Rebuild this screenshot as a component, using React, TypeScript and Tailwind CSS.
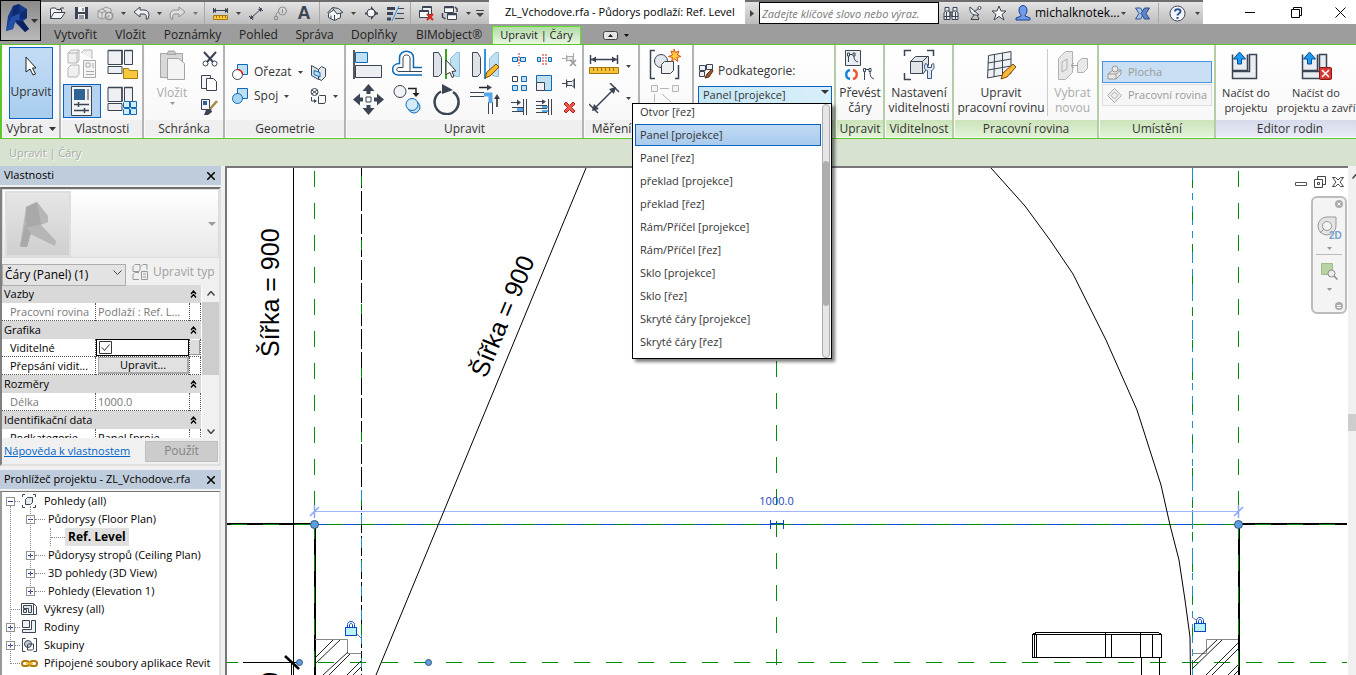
import React from "react";

type Kids = { children?: React.ReactNode };

const INK = "#3b4453";
const BLUE = "#0c6bb8";
const SKY = "#bfe0f3";

function Svg({ w, h, children }: Kids & { w: number; h: number }) {
  return (
    <svg width={w} height={h} viewBox={`0 0 ${w} ${h}`} fill="none" className="shrink-0" aria-hidden="true">
      {children}
    </svg>
  );
}

function Arrow({ color = "#444" }: { color?: string }) {
  return (
    <Svg w={5} h={3}>
      <path d="M0 0h5L2.5 3z" fill={color} />
    </Svg>
  );
}

function QButton({ label, children, narrow }: Kids & { label: string; narrow?: boolean }) {
  return (
    <button
      aria-label={label}
      className={narrow ? "flex h-full w-3 shrink-0 items-center justify-center" : "flex h-full w-6 shrink-0 items-center justify-center"}
    >
      {children}
    </button>
  );
}

function QSep() {
  return <span className="mx-[3px] h-full w-px shrink-0 bg-[#a9a9a9]" />;
}

function AppLogo() {
  return (
    <Svg w={24} h={30}>
      <path d="M8 3 14 1l8 5v9l-4 3 6 8-4 3-10-10-2 7-7 2 2-15z" fill="#163a8c" />
      <path d="M8 3 14 1l1 9-8 4zM15 10l7-4v9l-7 1z" fill="#0e2a70" />
      <path d="m7 14 8-4-1 8-4 1-2 7-7 2 3-9z" fill="#2450a8" />
      <path d="m10 17 8 1 6 8-4 3z" fill="#0b2360" />
    </Svg>
  );
}

function QuickAccess() {
  return (
    <div className="flex h-6 w-[448px] shrink-0 items-center border-t-2 border-[#6d6d6d] bg-linear-to-b from-[#e4e4e4] to-[#bcbcbc] pl-1">
      <QButton label="Otevřít">
        <Svg w={17} h={14}>
          <path d="M1.5 12.500V3l1-1h4l1 1.500h5V6M1.500 12.500 5 6.500h11l-4 6z" stroke={INK} fill="#f4f4f4" />
          <path d="M10 4.500 12 2h3" stroke={INK} />
        </Svg>
      </QButton>
      <QButton label="Uložit">
        <Svg w={15} h={14}>
          <path d="M1 1h13v12H1z" fill={INK} />
          <path d="M4 1h7v5H4zM4 8h7v5H4z" fill="#f3f3f3" />
          <path d="M9 2v3M5 10h5M5 12h5" stroke={INK} />
        </Svg>
      </QButton>
      <QButton label="Synchronizovat">
        <Svg w={17} h={15}>
          <path d="M1 5l4-2 4 2v6l-4 2-4-2zM5 3l4-2 5 2v5M1 5l4 2 4-2M5 7v6" stroke="#999" fill="#ddd" />
          <circle cx="12" cy="10" r="4" fill="#b5b5b5" stroke="#8d8d8d" />
          <path d="M10 10a2 2 0 1 1 2 2" stroke="#eee" />
        </Svg>
      </QButton>
      <QButton label="Možnosti synchronizace" narrow><Arrow /></QButton>
      <QButton label="Zpět">
        <Svg w={17} h={14}>
          <path d="M1 6 7 1v3h4c3 0 5 2 5 5l-1 4h-2c1-3 0-5-2-5H7v3z" fill="#f1f1f1" stroke={INK} />
        </Svg>
      </QButton>
      <QButton label="Historie zpět" narrow><Arrow /></QButton>
      <QButton label="Znovu">
        <Svg w={17} h={14}>
          <path d="M16 6 10 1v3H6C3 4 1 6 1 9l1 4h2C3 10 4 8 6 8h4v3z" fill="#dedede" stroke="#8e8e8e" />
        </Svg>
      </QButton>
      <QButton label="Historie znovu" narrow><Arrow color="#777" /></QButton>
      <QSep />
      <QButton label="Měřit">
        <Svg w={17} h={13}>
          <path d="M1 3.500h15M1.500 1v5M15.500 1v5" stroke={INK} />
          <path d="m1 3.500 3-2.500v5zM16 3.500 13 1v5z" fill={INK} />
          <path d="M1.500 8.500h14v4h-14z" fill="#fc3" stroke="#a97412" />
          <path d="M4.500 9v2M7.500 9v2M10.500 9v2M13.500 9v2" stroke="#a97412" />
        </Svg>
      </QButton>
      <QButton label="Možnosti měření" narrow><Arrow /></QButton>
      <QButton label="Zarovnaná kóta">
        <Svg w={17} h={15}>
          <path d="m3 12 10-9M1 10l4 4M11 1l4 4" stroke={INK} />
          <path d="m2 13 1-4 3 3zM14 2l-4 1 3 3z" fill={INK} />
        </Svg>
      </QButton>
      <QButton label="Popisek">
        <Svg w={15} h={14}>
          <circle cx="9.500" cy="5" r="4" stroke="#8c8c8c" />
          <path d="M9.500 3v4M5 6 3 8v3M1.500 10.500h3v3h-3z" stroke="#8c8c8c" />
        </Svg>
      </QButton>
      <QButton label="Text">
        <span className="font-['Liberation_Sans',sans-serif] text-lg leading-5 font-bold text-[#3b4453]">A</span>
      </QButton>
      <QSep />
      <QButton label="Výchozí 3D pohled">
        <Svg w={17} h={15}>
          <path d="M1.500 7.500v4l6 3 6-3v-5l-5-4z" fill="#f6f6f6" stroke={INK} />
          <path d="m.5 7 5-5.500 6 1L16 6.500l-6 1.500L5.500 2" fill="#d5d8dc" stroke={INK} />
          <path d="M7.500 9v5M4 9.500v3" stroke={INK} />
        </Svg>
      </QButton>
      <QButton label="Možnosti 3D" narrow><Arrow /></QButton>
      <QButton label="Řez">
        <Svg w={15} h={14}>
          <path d="M1 7.500h3M11 7.500h3" stroke={INK} strokeWidth="2" />
          <path d="M7 0l6 7-6 7z" fill={INK} />
          <circle cx="7" cy="7" r="4" fill="#f6f6f6" stroke={INK} />
        </Svg>
      </QButton>
      <QButton label="Tenké čáry">
        <Svg w={17} h={15}>
          <path d="M0 2.500h8M0 7.500h6M0 13h4" stroke={INK} strokeWidth="3" />
          <path d="M11 2.500h6M10 7.500h7M8 12.500h9" stroke={INK} />
          <path d="M12 0 5 15" stroke="#2e94e6" />
        </Svg>
      </QButton>
      <QSep />
      <QButton label="Zavřít skryté">
        <Svg w={17} h={16}>
          <path d="M4.500 1.500h9v8h-9z" fill="#eee" stroke={INK} />
          <path d="M1.500 5.500h9v7h-9z" fill="#fafafa" stroke={INK} />
          <path d="M2 6.500h8M5 2.500h8" stroke={INK} />
          <path d="m9 9 6 6M15 9l-6 6" stroke="#d9261c" strokeWidth="2" />
        </Svg>
      </QButton>
      <QButton label="Přepnout okna">
        <Svg w={18} h={16}>
          <path d="M3.500 1.500h9v6h-9zM6.500 8.500h9v6h-9z" fill="#fafafa" stroke={INK} />
          <path d="M3 2.500h10M6 9.500h10M14 2l2 2v3M1.500 8v4l3 2" stroke={INK} strokeWidth="1.500" />
        </Svg>
      </QButton>
      <QButton label="Seznam oken" narrow><Arrow /></QButton>
      <QButton label="Přizpůsobit panel" narrow>
        <Svg w={8} h={7}>
          <path d="M0 .5h8" stroke="#444" />
          <path d="M0 3h8L4 7z" fill="#444" />
        </Svg>
      </QButton>
    </div>
  );
}

function InfoCenter() {
  return (
    <div className="flex h-6 w-[458px] shrink-0 items-center border-t-2 border-[#6d6d6d] bg-linear-to-b from-[#e4e4e4] to-[#bcbcbc]">
      <button aria-label="Sbalit hledání" className="flex h-full w-3.5 shrink-0 items-center justify-center">
        <Svg w={4} h={7}>
          <path d="M0 0v7l4-3.500z" fill="#444" />
        </Svg>
      </button>
      <input
        aria-label="Hledat"
        placeholder="Zadejte klíčové slovo nebo výraz."
        className="h-[22px] w-[180px] shrink-0 border border-black bg-white px-0.5 text-[11px] italic placeholder:text-[#777]"
      />
      <button aria-label="Najít" className="flex w-6 justify-center">
        <Svg w={16} h={15}>
          <path d="M2 5V1.500h4V5M10 5V1.500h4V5M1 13.500V7l1.500-2H6l1 2v6.500zM9 13.500V7l1-2h3.500L15 7v6.500zM7 6h2v4H7z" fill="#e9e9e9" stroke={INK} />
          <path d="M3.500 6v7M12.500 6v7M1 10.500h6M9 10.500h6" stroke={INK} />
        </Svg>
      </button>
      <button aria-label="Centrum komunikace" className="flex w-6 justify-center">
        <Svg w={15} h={16}>
          <path d="M2 2c-1 5 2 9 9 8z" fill="#eee" stroke={INK} />
          <path d="m6 7 5-4M6 10l-3 4.500h8M9 10l2 4" stroke={INK} />
          <circle cx="11.500" cy="3" r="1.500" stroke={INK} fill="#fff" />
        </Svg>
      </button>
      <button aria-label="Oblíbené" className="flex w-6 justify-center">
        <Svg w={16} h={16}>
          <path d="m8 1 2 5h5l-4 3.500 2 5.500-5-3.500L3 15l2-5.500L1 6h5z" fill="#f5f5f5" stroke={INK} />
        </Svg>
      </button>
      <button className="flex items-center gap-1 pl-1 text-xs text-black">
        <Svg w={16} h={16}>
          <path d="M4 5c0-6 8-6 8 0 0 3-1 4-2 5v1l5 2v2H1v-2l5-2v-1C5 9 4 8 4 5z" fill="#6f9be8" stroke="#1d3f94" />
        </Svg>
        <span className="w-[82px] text-left">michalknotek...</span>
        <Arrow />
      </button>
      <button aria-label="Exchange Apps" className="flex w-8 justify-center">
        <Svg w={15} h={13}>
          <path d="M.5 1h5L9 6.500 5.500 12h-5L4 6.500z" fill="#a9c2ea" stroke="#2f5590" />
          <path d="M14.500 1h-5L6 6.500 9.500 12h5L11 6.500z" fill="#5f86c6" stroke="#2a4a86" />
        </Svg>
      </button>
      <span className="h-5 w-px bg-[#aaa]" />
      <button aria-label="Nápověda" className="flex w-9 justify-center">
        <Svg w={17} h={17}>
          <circle cx="8.500" cy="8.500" r="7.500" fill="#f4f6fa" stroke={INK} />
          <path d="M6 6.500C6 3.500 11.500 3.500 11.500 6.500c0 2-3 2-3 4M8.500 12v2" stroke="#2d5599" strokeWidth="2" />
        </Svg>
      </button>
      <Arrow />
    </div>
  );
}

function WindowControls() {
  return (
    <div className="flex h-6 w-[153px] shrink-0 items-center bg-white pl-6">
      <button aria-label="Minimalizovat" className="flex w-[46px] shrink-0 justify-center">
        <Svg w={10} h={10}><path d="M0 5.500h10" stroke="#000" /></Svg>
      </button>
      <button aria-label="Obnovit" className="flex w-[46px] shrink-0 justify-center">
        <Svg w={11} h={11}><path d="M.5 2.500h8v8h-8zM2.500 2.500v-2h8v8h-2" stroke="#000" /></Svg>
      </button>
      <button aria-label="Zavřít" className="flex flex-1 justify-center pl-1.5">
        <Svg w={11} h={11}><path d="m.5.5 10 10M10.500.5l-10 10" stroke="#000" /></Svg>
      </button>
    </div>
  );
}

function Header() {
  const tab = "flex h-5 items-center justify-center pt-0.5 text-xs text-[#222]";
  return (
    <header className="flex shrink-0 bg-[#9d9d9d]">
      <button
        aria-label="Nabídka aplikace"
        className="flex h-[41px] w-[41px] shrink-0 items-start gap-0.5 border border-black bg-linear-to-b from-[#8a8a8a] to-[#b9b9b9] pt-0.5 pl-1"
      >
        <AppLogo />
        <span className="mt-4"><Svg w={7} h={4}><path d="M0 0h7L3.500 4z" fill="#333" /></Svg></span>
      </button>
      <div className="flex min-w-0 flex-1 flex-col">
        <div className="flex bg-white">
          <QuickAccess />
          <h1 className="min-w-0 flex-1 overflow-hidden bg-white pl-4 text-[11px] leading-6 whitespace-nowrap text-black">
            ZL_Vchodove.rfa - Půdorys podlaží: Ref. Level
          </h1>
          <InfoCenter />
          <WindowControls />
        </div>
        <nav className="flex items-end">
          <button className={`${tab} ml-1 w-[61px]`}>Vytvořit</button>
          <button className={`${tab} w-[49px]`}>Vložit</button>
          <button className={`${tab} w-[75px]`}>Poznámky</button>
          <button className={`${tab} w-[57px]`}>Pohled</button>
          <button className={`${tab} w-[55px]`}>Správa</button>
          <button className={`${tab} w-[64px]`}>Doplňky</button>
          <button className={`${tab} w-[86px]`}>BIMobject®</button>
          <button className="flex h-[18px] w-[89px] items-center justify-center border border-b-0 border-[#5fe12c] bg-linear-to-b from-[#b2dba6] to-[#e9f6e3] text-[11px] text-[#222]">
            Upravit | Čáry
          </button>
          <button aria-label="Minimalizovat pás karet" className="mb-1 ml-[22px] flex items-center gap-1.5">
            <Svg w={15} h={9}>
              <rect x=".5" y=".5" width="14" height="8" rx="2" fill="#e6e6e6" stroke="#444" />
              <path d="M5 6h5L7.500 3z" fill="#222" />
            </Svg>
            <Arrow color="#111" />
          </button>
        </nav>
      </div>
    </header>
  );
}

type Tone = "plain" | "green" | "blue";

const captionTone: Record<Tone, string> = {
  plain: "bg-[#efefef]",
  green: "bg-linear-to-b from-[#cbe3ba] to-[#e2f3d8]",
  blue: "bg-linear-to-b from-[#d5d9ea] to-[#e9ebf7]",
};

const edgeTone: Record<Tone, string> = {
  plain: "border-[#b4b4b4]",
  green: "border-[#b3cda6]",
  blue: "border-[#b3cda6]",
};

function Panel({ label, width, tone = "plain", children }: Kids & { label?: React.ReactNode; width: string; tone?: Tone }) {
  return (
    <section className={`flex flex-col border-r-2 pl-px ${edgeTone[tone]} ${width}`}>
      <div className="flex flex-1 bg-linear-to-b from-white to-[#f8f8f8]">{children}</div>
      <h2 className={`mb-px flex h-[17px] items-center justify-center gap-1.5 text-xs text-[#333] ${captionTone[tone]}`}>{label}</h2>
    </section>
  );
}

function BigButton({ icon, lines, width, muted, small }: { icon: React.ReactNode; lines: string[]; width: string; muted?: boolean; small?: boolean }) {
  return (
    <button
      className={`flex flex-col items-center pt-1 leading-[15px] whitespace-nowrap ${small ? "text-[11px]" : "text-xs"} ${muted ? "text-[#aaa]" : "text-[#333]"} ${width}`}
    >
      <span className="mb-1 flex h-8 items-center">{icon}</span>
      {lines.map((l) => (
        <span key={l} className="leading-[15px]">{l}</span>
      ))}
    </button>
  );
}

function TypeGrid({ overlay }: { overlay: React.ReactNode }) {
  return (
    <Svg w={31} h={30}>
      <path d="M1 1.500h14v14H1zM17.500 1.500h8v14h-8zM1 17.500h14v7H1z" fill="#eef0f3" stroke={INK} />
      <path d="M1 1.500h14v14M17.500 1.500h8" stroke={INK} strokeWidth="1.500" />
      {overlay}
    </Svg>
  );
}

function LoadIcon({ close }: { close?: boolean }) {
  return (
    <Svg w={31} h={31}>
      <path d="M1.500 4.500h15v16h-15zM17.500 4.500h8v16h-8zM1.500 21.500h24v7h-24z" fill="#e9ecf0" />
      <path d="M1.500 4.500v16h15v-16M1.500 21v7.500h24v-24h-7v17h-17" stroke={INK} strokeWidth="1.500" />
      <path d="M6.500 14V9h-4l6-7 6 7h-4v5z" fill="#1d9bf0" stroke="#0a4e9b" />
      {close && (
        <>
          <rect x="18.500" y="17.500" width="12" height="12" rx="1" fill="#d33a34" stroke="#8e1512" />
          <path d="m21 20 7 7M28 20l-7 7" stroke="#fff" strokeWidth="1.500" />
        </>
      )}
    </Svg>
  );
}

function ModifyTools() {
  return (
    <>
      <div className="grid grid-cols-[39px_39px_39px_39px] grid-rows-[34px_36px] place-items-center pt-0.5 pl-0.5">
        <button aria-label="Zarovnat">
          <Svg w={31} h={31}>
            <path d="M1 1v29" stroke="#222" strokeWidth="1.500" />
            <path d="M2.500 3.500h12v10h-12z" fill={SKY} stroke={BLUE} />
            <path d="M2.500 16.500h26v12h-26z" fill="#eceff2" stroke={INK} />
          </Svg>
        </button>
        <button aria-label="Odsadit">
          <Svg w={31} h={28}>
            <path d="M30 17.500h-8.500V8c0-9-14-9-14 0v5.500c-9 0-9 11.500-1 11.500H30" stroke={BLUE} strokeWidth="1.500" />
            <path d="M30 21.500h-12V8c0-4-7-4-7 0v9.500H7c-3 0-3 4 0 4h11" stroke={INK} />
          </Svg>
        </button>
        <button aria-label="Ozrcadlit - vybrat osu">
          <Svg w={31} h={31}>
            <path d="M2.500 3.500h5l3 5v16l-3 3h-5z" fill="#dfe3e8" stroke={INK} />
            <path d="M28.500 3.500h-3l-6 6v15l6 3h3z" fill={SKY} stroke="#8fbcd8" />
            <path d="M15 0v30" stroke="#37a61c" strokeWidth="2" />
            <path d="m15 11 10 11-4 .5 2 5-2 1-2-5-4 2z" fill="#fff" stroke="#333" />
          </Svg>
        </button>
        <button aria-label="Ozrcadlit - nakreslit osu">
          <Svg w={31} h={31}>
            <path d="M2.500 3.500h5l3 5v16l-3 3h-5z" fill="#dfe3e8" stroke={INK} />
            <path d="M28.500 3.500h-3l-6 6v15l6 3h3z" fill={SKY} stroke="#8fbcd8" />
            <path d="M15 0v30" stroke="#2e94e6" strokeWidth="2" />
            <path d="m15 29 2-6 9-8 3 3-9 9z" fill="#fbb829" stroke="#7b4a0b" />
          </Svg>
        </button>
        <button aria-label="Přesunout">
          <Svg w={31} h={31}>
            <path d="m15.500 0 6 7h-12zM15.500 31l6-7h-12zM0 15.500l7-6v12zM31 15.500l-7-6v12z" fill={INK} />
            <path d="M15.500 5v5M15.500 21v5M5 15.500h5M21 15.500h5" stroke={INK} strokeWidth="4" />
            <path d="M13 13h5v5h-5z" fill="#fff" stroke={INK} />
          </Svg>
        </button>
        <button aria-label="Kopírovat">
          <Svg w={31} h={31}>
            <circle cx="8" cy="7.500" r="6" fill="#f2f3f5" stroke={INK} />
            <path d="M16 4.500h8v5" stroke="#222" strokeWidth="1.500" />
            <path d="m24 13-3.500-4h7z" fill="#222" />
            <circle cx="22" cy="23" r="6" fill={SKY} stroke={BLUE} />
            <circle cx="20" cy="20.500" r="6" fill="#d5ebf8" stroke={BLUE} />
          </Svg>
        </button>
        <button aria-label="Otočit">
          <Svg w={29} h={31}>
            <path d="M9 7.500A12 12 0 1 0 21 8" stroke={INK} strokeWidth="2.500" />
            <path d="M10 0v10l11-4z" fill={INK} />
          </Svg>
        </button>
        <button aria-label="Oříznout roh">
          <Svg w={31} h={31}>
            <path d="M9 3.500h10" stroke="#222" strokeWidth="1.500" />
            <path d="m22 3.500-5-3v6zM27 10l-3 5h6z" fill={INK} />
            <path d="M27 14v9" stroke="#222" strokeWidth="1.500" />
            <path d="M0 8.500h14M0 12.500h14M18.500 18v12M22.500 18v12" stroke={INK} />
            <path d="M14 10.500h6.500V19" stroke="#58a7e8" strokeWidth="4" />
          </Svg>
        </button>
      </div>
      <div className="grid grid-cols-[25px_25px_25px] grid-rows-[24px_24px_24px] place-items-center pt-0.5 pl-0.5">
        <button aria-label="Rozdělit prvek">
          <Svg w={17} h={13}>
            <path d="M1.500 4.500h5v4h-5zM9.500 4.500h5v4h-5z" fill={SKY} stroke={BLUE} />
            <path d="M8 0v13" stroke="#c9281c" strokeDasharray="2 1" />
          </Svg>
        </button>
        <button aria-label="Rozdělit s mezerou">
          <Svg w={17} h={13}>
            <path d="M1.500 4.500h3v4h-3zM12.500 4.500h3v4h-3z" fill={SKY} stroke={BLUE} />
            <path d="M7 1v11M10 1v11" stroke="#c9281c" strokeDasharray="2 1" />
          </Svg>
        </button>
        <button aria-label="Uvolnit">
          <Svg w={17} h={17}>
            <path d="M1 7.500h4M5.500 4v7M6 5.500h6v4H6zM12.500 2v11" stroke="#aaa" fill="#eee" />
            <path d="m9 9 6 6M15 9l-6 6" stroke="#999" strokeWidth="1.500" />
          </Svg>
        </button>
        <button aria-label="Pole">
          <Svg w={17} h={17}>
            <path d="M1.500 1.500h5v5h-5z" fill="#fff" stroke={INK} />
            <path d="M10.500 1.500h5v5h-5zM1.500 10.500h5v5h-5zM10.500 10.500h5v5h-5z" fill={SKY} stroke={BLUE} />
          </Svg>
        </button>
        <button aria-label="Měřítko">
          <Svg w={17} h={17}>
            <path d="M.5.5h15v15H.5z" fill={SKY} stroke={BLUE} />
            <path d="M.5 7.500h8v8h-8z" fill="#f0f2f4" stroke={INK} />
          </Svg>
        </button>
        <button aria-label="Připnout">
          <Svg w={15} h={13}>
            <path d="M0 6.500h4M4.500 2.500v8M5 4.500h5l2-2v8l-2-2H5z" stroke={INK} fill="#eee" />
            <path d="M12.500 1.500v10" stroke={INK} />
          </Svg>
        </button>
        <button aria-label="Oříznout jeden prvek">
          <Svg w={17} h={16}>
            <path d="M0 3.500h8M1 8.500h11M1 12.500h11M12.500 0v16M15.500 0v16" stroke={INK} />
            <path d="m10 3.500-4-3v6z" fill={INK} />
            <path d="M6 10.500h6" stroke="#58a7e8" strokeWidth="3" />
          </Svg>
        </button>
        <button aria-label="Oříznout více prvků">
          <Svg w={17} h={16}>
            <path d="M0 2.500h8M0 6.500h11M0 9.500h11M0 13.500h11M12.500 0v16M15.500 0v16" stroke={INK} />
            <path d="m10 2.500-4-2v5z" fill={INK} />
            <path d="M6 8h6M6 12h6" stroke="#58a7e8" strokeWidth="2" />
          </Svg>
        </button>
        <button aria-label="Odstranit">
          <Svg w={13} h={13}>
            <path d="m1 3 2-2 3.500 3.500L10 1l2 2-3.500 3.500L12 10l-2 2-3.500-3.500L3 12l-2-2 3.500-3.500z" fill="#ee5a50" stroke="#b81c14" />
          </Svg>
        </button>
      </div>
    </>
  );
}

const options = [
  "Panel [projekce]",
  "Panel [řez]",
  "překlad [projekce]",
  "překlad [řez]",
  "Rám/Příčel [projekce]",
  "Rám/Příčel [řez]",
  "Sklo [projekce]",
  "Sklo [řez]",
  "Skryté čáry [projekce]",
  "Skryté čáry [řez]",
];

function Subcategory() {
  return (
    <div className="flex w-full flex-col pt-4 pl-[3px]">
      <label htmlFor="subcategory" className="flex h-5 items-center gap-1 text-xs text-[#333]">
        <Svg w={16} h={16}>
          <path d="M1.500 2.500h6v5h-6zM8.500 1.500h6v5h-6zM1.500 8.500h5v5h-5z" fill="#eef0f3" stroke={INK} />
          <path d="m14 6-5 5-2 4 4-1 4-6z" fill="#9b5a2e" stroke="#5a3015" />
        </Svg>
        Podkategorie:
      </label>
      <div className="relative h-[22px] w-[134px]">
        <select
          id="subcategory"
          className="h-full w-full appearance-none border border-[#0a62c4] bg-linear-to-r from-[#c6e8f6] to-[#d8effa] pb-1 pl-1 text-[11px] text-[#333]"
        >
          {options.map((o) => (
            <option key={o}>{o}</option>
          ))}
        </select>
        <span className="pointer-events-none absolute top-[9px] right-[3px]">
          <Svg w={8} h={4}><path d="M0 0h8L4 4z" fill="#333" /></Svg>
        </span>
        <div className="absolute top-full right-0 z-20 flex w-[200px] border border-black bg-white shadow-[3px_3px_3px_rgba(0,0,0,0.5)]">
          <ul className="flex-1 pr-px pb-1 pl-0.5 text-[11px] text-[#333]">
            <li className="h-5 pl-[5px] leading-4">Otvor [řez]</li>
            {options.map((o, i) => (
              <li
                key={o}
                className={
                  i === 0
                    ? "mb-px h-[22px] border border-[#0a62c4] bg-linear-to-b from-[#c0daf4] to-[#a9cbed] pl-1 leading-5"
                    : "h-[23px] pl-[5px] leading-[22px]"
                }
              >
                {o}
              </li>
            ))}
          </ul>
          <div className="mr-px flex w-2 flex-col rounded-sm border border-[#aaa] bg-[#e6e6e6] pt-14">
            <span className="h-[145px] rounded-sm bg-[#adadad]" />
          </div>
        </div>
      </div>
    </div>
  );
}

function Ribbon() {
  return (
    <div className="relative z-10 flex h-[95px] shrink-0 border-y border-l-2 border-[#5fc52c] bg-[#fafafa]">
      <Panel width="w-[59px]" label={<>Vybrat <Svg w={7} h={4}><path d="M0 0h7L3.500 4z" fill="#333" /></Svg></>}>
        <button className="mt-0.5 ml-1.5 flex h-[72px] w-11 flex-col items-center gap-2 border border-[#0a62c4] bg-linear-to-b from-[#c3dcf5] to-[#a9cdef] pt-2 text-xs text-[#333]">
          <Svg w={13} h={20}>
            <path d="m1 1 10 11H7.500l3 6-2.500 1-3-6-4 3z" fill="#fff" stroke="#222" />
          </Svg>
          Upravit
        </button>
      </Panel>
      <Panel width="w-[83px]" label="Vlastnosti">
        <div className="grid grid-cols-[39px_42px] grid-rows-[37px_37px] place-items-center">
          <button aria-label="Vlastnosti typu">
            <Svg w={31} h={30}>
              <path d="M2 4l3-3h8v10l-2 3H2zM15 4l3-3h8v9M2 19l3-3h8v9l-2 3H2zM2 4h9v10M11 4l2-3" stroke="#b5b5b5" fill="#f0f0f0" />
              <path d="M17.500 11.500h12v17h-12z" fill="#f5f5f5" stroke="#aaa" />
              <path d="M20 14h4v4h-4zM27 14v5M20 22.500h8M20 25.500h8" stroke="#aaa" />
            </Svg>
          </button>
          <button aria-label="Kategorie rodiny">
            <TypeGrid overlay={<path d="M16.500 29.500v-10h5l1 2h8v8z" fill="#f8c83c" stroke="#a9790f" />} />
          </button>
          <button aria-label="Vlastnosti" className="flex h-[34px] w-[38px] items-center justify-center border border-[#0a62c4] bg-[#b3d3f0]">
            <Svg w={21} h={30}>
              <path d="M.5.5h20v29H.500z" fill="#f3f5f7" stroke={INK} />
              <path d="M3 3h11v11H3z" fill="#2e6496" />
              <path d="M16 3h2v11h-2z" fill="#999" />
              <path d="M3 18.500h15M3 24.500h15M7.500 16v5M13.500 22v5" stroke={INK} strokeWidth="1.500" />
            </Svg>
          </button>
          <button aria-label="Typy rodin">
            <TypeGrid overlay={<path d="M16.500 16.500l1-1h5v6h-6zM23.500 16.500l1-1h5v6h-6zM16.500 23.500l1-1h5v6h-6zM23.500 23.500l1-1h5v6h-6z" fill="#d3ecf8" stroke={BLUE} />} />
          </button>
        </div>
      </Panel>
      <Panel width="w-[81px]" label="Schránka">
        <button className="flex w-[54px] flex-col items-center pt-1 text-xs text-[#aaa]">
          <Svg w={27} h={32}>
            <path d="M1.500 4.500h22v24h-22z" fill="#d8d8d8" stroke="#a5a5a5" />
            <path d="M8 5.500 9.500 2h6L17 5.500z" fill="#c8c8c8" stroke="#a5a5a5" />
            <path d="M8.500 9.500h11l6 5v16h-17z" fill="#f4f4f4" stroke="#a5a5a5" />
          </Svg>
          <span className="mt-1 leading-[15px]">Vložit</span>
          <span className="mt-0.5"><Arrow color="#999" /></span>
        </button>
        <div className="grid grid-rows-[24px_24px_24px] place-items-center pt-0.5 pl-0.5">
          <button aria-label="Vyjmout">
            <Svg w={16} h={16}>
              <path d="m2 1 9 10M14 1 5 11" stroke={INK} strokeWidth="2" />
              <circle cx="3.500" cy="12.500" r="2.500" stroke={INK} />
              <circle cx="12.500" cy="12.500" r="2.500" stroke={INK} />
            </Svg>
          </button>
          <button aria-label="Kopírovat do schránky">
            <Svg w={17} h={17}>
              <path d="M.5.5h9v13h-9z" fill="#f5f5f5" stroke={INK} />
              <path d="M5.500 3.500h7l3 3v9h-10z" fill="#fff" stroke={INK} />
            </Svg>
          </button>
          <button aria-label="Přiřadit vlastnosti typu">
            <Svg w={17} h={17}>
              <path d="M.5.500h8v10h-8z" fill="#f5f5f5" stroke={INK} />
              <path d="M2 2h4v4H2z" fill="#2e6496" />
              <path d="m16 2-7 8" stroke="#a08a50" strokeWidth="2.500" />
              <path d="m3 16 2-5 5-1 1 3-4 3z" fill={INK} />
            </Svg>
          </button>
        </div>
      </Panel>
      <Panel width="w-[121px]" label="Geometrie">
        <div className="flex w-full flex-col gap-1.5 pt-[18px] pl-1 text-xs text-[#333]">
          <div className="flex h-[18px] items-center">
            <button className="flex w-[74px] items-center gap-1.5 pl-0.5">
              <Svg w={16} h={17}>
                <path d="M5.500.5h10v10h-10z" fill={SKY} stroke={BLUE} />
                <circle cx="5.500" cy="10.500" r="5" fill="#fff" stroke={INK} />
                <path d="M5.500 5.500a5 5 0 0 1 5 5" stroke="#e0211a" strokeWidth="1.500" />
              </Svg>
              Ořezat <Arrow />
            </button>
            <button aria-label="Rozdělit plochu" className="ml-1.5">
              <Svg w={17} h={17}>
                <path d="m1.500 1.500 7 4v10l-7-4zM8.500 5.500l3-3 4 2v8l-4 4-3-1.500" fill="#e4e7ea" stroke={INK} />
                <path d="m4 6.500 6 2v4.500l-6-2.500z" fill={SKY} stroke={BLUE} />
              </Svg>
            </button>
          </div>
          <div className="flex h-[18px] items-center">
            <button className="flex w-[74px] items-center gap-1.5 pl-0.5">
              <Svg w={16} h={17}>
                <path d="M5.500.5h10v10h-10z" fill={SKY} stroke={BLUE} />
                <circle cx="5.500" cy="10.500" r="5" fill="#a8d6f0" stroke={BLUE} />
              </Svg>
              Spoj <Arrow />
            </button>
            <button aria-label="Malovat" className="ml-1.5 flex items-center gap-1.5">
              <Svg w={17} h={17}>
                <circle cx="4.500" cy="4" r="3.500" stroke={INK} />
                <path d="m2 2 5 4M7 2 2 6M1.500 9v4h4M8.500 8.500l1-1h6v6l-1 2h-6z" stroke={INK} />
                <path d="m4 11 3 2-3 2z" fill={INK} />
              </Svg>
              <Arrow />
            </button>
          </div>
        </div>
      </Panel>
      <Panel width="w-[238px]" label="Upravit">
        <ModifyTools />
      </Panel>
      <Panel width="w-[56px]" label="Měření">
        <div className="flex flex-col gap-1 pt-2 pl-1">
          <button aria-label="Měřit mezi dvěma referencemi" className="flex h-[26px] items-center gap-1.5">
            <Svg w={31} h={22}>
              <path d="M1 4.500h28M1.500 0v9M28.500 0v9" stroke={INK} strokeWidth="1.500" />
              <path d="m2 4.500 5-3v6zM28 4.500l-5-3v6z" fill={INK} />
              <path d="M.5 12.500h29v6H.5z" fill="#f6c235" stroke="#a97412" />
              <path d="M4.500 13v3M8.500 13v3M12.500 13v3M16.500 13v3M20.500 13v3M24.500 13v3" stroke="#a97412" />
            </Svg>
            <Arrow />
          </button>
          <button aria-label="Kótovat" className="flex items-center gap-1.5">
            <Svg w={31} h={31}>
              <path d="M4 27 26 5M0 21l9 9M21 0l9 9" stroke={INK} strokeWidth="1.500" />
              <path d="m3 28 2-7 5 5zM27 4l-7 2 5 5z" fill={INK} />
            </Svg>
            <Arrow />
          </button>
        </div>
      </Panel>
      <Panel width="w-[54px]">
        <div className="flex flex-col items-center gap-1 pt-1 pl-2">
          <button aria-label="Vytvořit skupinu">
            <Svg w={32} h={31}>
              <path d="M6 1.500H1.500v28H6M26 29.500h3.500V16" stroke={INK} strokeWidth="1.500" />
              <circle cx="12" cy="12" r="6.500" fill="#e3e6ea" stroke={INK} />
              <path d="m12.500 15.500 3-3h9v9l-3 3h-9z" fill="#eef0f2" stroke={INK} />
              <path d="m25 0 1.500 3.500L30 2l-1.500 4 3.500 1.500-4 1 1 4-3.500-2.500-3 2.500 1-4-4-1 4-1.500L22 2l3 1z" fill="#ffce3a" stroke="#d9531b" />
            </Svg>
          </button>
          <button aria-label="Vytvořit podobné">
            <Svg w={31} h={20}>
              <path d="M1.500 1.500h6v6h-6zM22.500 1.500h6v6h-6zM10 4.500h9M4.500 10v8M12 10l9 8" stroke="#b5b5b5" fill="#f3f3f3" />
            </Svg>
          </button>
        </div>
      </Panel>
      <Panel width="w-[142px]" tone="green">
        <Subcategory />
      </Panel>
      <Panel width="w-[49px]" tone="green" label="Upravit">
        <BigButton
          width="w-full"
          lines={["Převést", "čáry"]}
          icon={
            <Svg w={31} h={31}>
              <path d="M.5.5h15v15H.5z" fill="#e8edf2" stroke={INK} />
              <path d="M2.500 3v3h2V3zM3.500 6v6M5 4.500h2.500M8 3v3h2V3zM9 6c0 4 1 5 4 6M18.500 18.500v3h2v-3zM19.500 22v8M21 19.500h3M24 18.500v3h2v-3zM25 22c0 4 1 6 4 7" stroke={INK} />
              <path d="M5 20c-5 1-5 8 0 9" stroke="#1b86dd" strokeWidth="2.500" />
              <path d="M8 29c5-1 5-8 0-9" stroke="#f0562b" strokeWidth="2.500" />
            </Svg>
          }
        />
      </Panel>
      <Panel width="w-[69px]" tone="green" label="Viditelnost">
        <BigButton
          width="w-full"
          lines={["Nastavení", "viditelnosti"]}
          icon={
            <Svg w={32} h={32}>
              <path d="M1.500 7V1.500H8M24 1.500h6.500V7M1.500 24v6.500H8" stroke={INK} strokeWidth="1.500" />
              <path d="m7.500 12.500 5-5h13v9l-5 8h-13z" fill="#e1e4e8" stroke={INK} />
              <path d="M7.500 12.500h12v12M19.500 12.500l5-5" stroke={INK} />
              <path d="M22.500 14.500c-2 4-1 6 2 7v8h4v-8c3-1 3-4 2-7l-2 1v3h-4v-3z" fill="#dfe8f4" stroke="#39557d" />
            </Svg>
          }
        />
      </Panel>
      <Panel width="w-[145px]" tone="green" label="Pracovní rovina">
        <BigButton
          width="w-[94px]"
          lines={["Upravit", "pracovní rovinu"]}
          icon={
            <Svg w={32} h={32}>
              <path d="M3.500 6.500 26 2.500v22L2.500 29zM9.500 5.500 9 28M17.500 4v22.500M3 14l23-4M3 21l23-4" fill="#eef0f3" stroke={INK} />
              <path d="m16 30 2-6 10-9 3 3-9 10z" fill="#f8b537" stroke="#7b4a0b" />
            </Svg>
          }
        />
        <span className="my-1 w-px bg-[#ccc]" />
        <BigButton
          width="w-[50px]"
          muted
          lines={["Vybrat", "novou"]}
          icon={
            <Svg w={31} h={31}>
              <path d="m1.500 8.500 7-7h7v21l-7 7h-7zM5 12l5-3v10l-5 3zM20.500 12.500l4-4h6v10l-4 4h-6z" fill="#e8e8e8" stroke="#b0b0b0" />
              <path d="M21 15.500h-6M17 13l-3 2.500 3 2.500" stroke="#a0a0a0" />
            </Svg>
          }
        />
      </Panel>
      <Panel width="w-[117px]" tone="green" label="Umístění">
        <div className="flex w-full flex-col gap-px px-0.5 pt-4 text-[11px] whitespace-nowrap text-[#999]">
          <button className="flex h-[22px] items-center gap-1.5 border border-[#4b93d8] bg-[#c9dff3] pl-1">
            <Svg w={15} h={15}>
              <path d="m1 9 5-4h8v4l-5 5H1z" stroke="#999" fill="#e6e6e6" />
              <path d="M1 9h8v5M9 9l5-4" stroke="#999" />
              <circle cx="8" cy="4" r="3" fill="#e6e6e6" stroke="#999" />
            </Svg>
            Plocha
          </button>
          <button className="flex h-[22px] items-center gap-1.5 border border-[#ddd] bg-[#f6f6f6] pl-1">
            <Svg w={15} h={15}>
              <path d="m7.500.5 7 7-7 7-7-7zM7.500 4l3.500 3.500L7.500 11 4 7.500z" stroke="#aaa" fill="#eee" />
            </Svg>
            Pracovní rovina
          </button>
        </div>
      </Panel>
      <section className="flex min-w-0 flex-1 flex-col overflow-hidden">
        <div className="flex flex-1 bg-linear-to-b from-white to-[#f8f8f8]">
          <BigButton small width="w-[60px] shrink-0" lines={["Načíst do", "projektu"]} icon={<LoadIcon />} />
          <BigButton small width="flex-1" lines={["Načíst do", "projektu a zavří"]} icon={<LoadIcon close />} />
        </div>
        <h2 className={`mb-px flex h-[17px] items-center justify-center pl-2 text-xs text-[#333] ${captionTone.blue}`}>Editor rodin</h2>
      </section>
    </div>
  );
}

function PaneHeader({ title }: { title: string }) {
  return (
    <div className="flex h-[19px] items-center justify-between bg-[#bfccdb] pr-1.5 pl-1 text-[11px] text-black">
      <span>{title}</span>
      <button aria-label={`Zavřít ${title}`}>
        <Svg w={8} h={8}><path d="m0 0 8 8M8 0 0 8" stroke="#000" strokeWidth="1.500" /></Svg>
      </button>
    </div>
  );
}

function GroupRow({ label }: { label: string }) {
  return (
    <tr className="h-[18px] bg-[#d9d9d9]">
      <th colSpan={3} className="p-0 pr-1 text-left font-normal text-black">
        <div className="flex items-center justify-between pl-0.5">
          {label}
          <Svg w={7} h={8}><path d="M1 4l2.500-3L6 4M1 7.500l2.500-3 2.500 3" stroke="#000" strokeWidth="1.300" /></Svg>
        </div>
      </th>
    </tr>
  );
}

function PropRow({ label, muted, last, children }: Kids & { label: string; muted?: boolean; last?: React.ReactNode }) {
  return (
    <tr className={`h-[18px] ${muted ? "text-[#777]" : "text-black"}`}>
      <td className="border-b border-dotted border-[#555] p-0 pl-2 whitespace-nowrap">{label}</td>
      <td className="border-b border-l border-dotted border-[#555] p-0 pl-0.5 whitespace-nowrap">{children}</td>
      <td className="border-x border-b border-dotted border-[#555] p-0">{last}</td>
    </tr>
  );
}

function Properties() {
  return (
    <section className="flex flex-col">
      <PaneHeader title="Vlastnosti" />
      <div className="mt-0.5 flex h-[279px] flex-col border-2 border-t-[#6e6e6e] border-r-[#e0e0e0] border-b-[#e0e0e0] border-l-[#808080] bg-[#f0f0f0]">
        <button className="flex h-[69px] shrink-0 items-center justify-between border border-[#dcdcdc] bg-linear-to-b from-white to-[#e8e8e8] pr-0.5 pl-0.5" aria-label="Výběr typu">
          <span className="flex size-[66px] items-center justify-center border-2 border-[#dedede] bg-linear-to-b from-[#e6e6e6] to-[#cfcfcf]">
            <Svg w={40} h={50}>
              <path d="m8 8 11-5 11 14v6l-7 3 15 16-1 5-25-12-3 13H2z" fill="#b6b6b6" />
              <path d="m8 8 11-5 4 22-15 4zM2 47l5-20 6 7-4 14z" fill="#a9a9a9" />
            </Svg>
          </span>
          <Svg w={8} h={4}><path d="M0 0h8L4 4z" fill="#999" /></Svg>
        </button>
        <div className="mt-[3px] mb-0.5 flex h-[22px] shrink-0 items-center">
          <div className="relative h-full w-[124px]">
            <select aria-label="Typ" className="h-full w-full appearance-none border border-[#adadad] bg-[#e3e3e3] pl-0.5 text-xs text-black">
              <option>Čáry (Panel) (1)</option>
            </select>
            <span className="pointer-events-none absolute top-[9px] right-1">
              <Svg w={9} h={5}><path d="m.5.5 4 4 4-4" stroke="#444" /></Svg>
            </span>
          </div>
          <button className="flex items-center gap-1 pl-1.5 text-xs text-[#a0a0a0]">
            <Svg w={17} h={17}>
              <path d="M1 2.500 3 .5h5v5l-1 2H1zM9 2.500l2-2h4v5M1 10.500l2-2h4M1 10.500v5h6" stroke="#999" />
              <path d="M9.500 7.500h6v8h-6zM11 10h3M11 13h3" stroke="#999" />
            </Svg>
            Upravit typ
          </button>
        </div>
        <div className="flex h-[153px] shrink-0 bg-white">
          <div className="h-full w-[199px] overflow-hidden">
            <table className="w-full table-fixed border-separate border-spacing-0 text-[11px] leading-4">
              <colgroup>
                <col className="w-[93px]" />
                <col className="w-[94px]" />
                <col className="w-[12px]" />
              </colgroup>
              <tbody>
                <GroupRow label="Vazby" />
                <PropRow label="Pracovní rovina" muted>Podlaží : Ref. L...</PropRow>
                <GroupRow label="Grafika" />
                <PropRow label="Viditelné" last={<button aria-label="Přiřadit parametr" className="block h-[15px] w-full border-r border-b border-[#999] bg-[#ddd]" />}>
                  <label className="-ml-0.5 flex h-[17px] items-center border border-black bg-white pl-0.5">
                    <input type="checkbox" defaultChecked aria-label="Viditelné" className="peer sr-only" />
                    <Svg w={13} h={13}>
                      <path d="M.5.500h12v12H.5z" fill="#fff" stroke="#333" />
                      <path d="m3 6.500 2.500 3 5-6" stroke="#333" />
                    </Svg>
                  </label>
                </PropRow>
                <PropRow label="Přepsání vidit...">
                  <button className="flex h-[17px] w-[91px] items-center justify-center border border-r-2 border-b-2 border-[#aaa] bg-[#e1e1e1]">Upravit...</button>
                </PropRow>
                <GroupRow label="Rozměry" />
                <PropRow label="Délka" muted>1000.0</PropRow>
                <GroupRow label="Identifikační data" />
                <PropRow label="Podkategorie">Panel [proje...</PropRow>
              </tbody>
            </table>
          </div>
          <div className="ml-px flex flex-1 flex-col items-center justify-between bg-[#f0f0f0] pt-1.5 pb-1">
            <Svg w={8} h={5}><path d="m.5 4.500 3.500-4 3.500 4" stroke="#444" strokeWidth="1.500" /></Svg>
            <span className="mt-1.5 h-[73px] w-full bg-[#cdcdcd]" />
            <span className="flex-1" />
            <Svg w={8} h={5}><path d="m.5.5 3.500 4 3.500-4" stroke="#444" strokeWidth="1.500" /></Svg>
          </div>
        </div>
        <div className="flex flex-1 items-center justify-between pr-px pl-0.5">
          <a href="#napoveda" className="text-[11px] text-[#0066cc] underline">Nápověda k vlastnostem</a>
          <button className="h-[21px] w-[73px] border border-[#bfbfbf] bg-[#ccc] text-xs text-[#838383]">Použít</button>
        </div>
      </div>
    </section>
  );
}

function Expander({ open }: { open?: boolean }) {
  return (
    <Svg w={9} h={9}>
      <rect x=".5" y=".5" width="8" height="8" fill="#fff" stroke="#919191" />
      <path d={open ? "M2 4.500h5" : "M2 4.500h5M4.500 2v5"} stroke="#2a3f8f" />
    </Svg>
  );
}

const treeIcons: Record<string, React.ReactNode> = {
  views: (
    <Svg w={16} h={16}>
      <path d="M4 1.500H1.500V4M12 1.500h2.500V4M1.500 12v2.500H4M14.500 12v2.500H12" stroke={INK} />
      <path d="m4.500 6.500 2-2h5v5l-2 2h-5z" fill="#e8ebee" stroke={INK} />
    </Svg>
  ),
  sheets: (
    <Svg w={17} h={14}>
      <path d="M.5 1.500h12l3 3v8H.5z" fill="#fff" stroke={INK} />
      <path d="M2.500 7.500h3v3h-3zM2.500 3.500h8v7h-3v-4h-5z" fill="#dfe3e8" stroke={INK} />
      <path d="M12.500 2v10" stroke={INK} />
    </Svg>
  ),
  families: (
    <Svg w={15} h={14}>
      <path d="M.5.5h7v7h-7zM9.500.5h4v12H.5v-3h9z" fill="#eef0f3" stroke={INK} />
    </Svg>
  ),
  groups: (
    <Svg w={15} h={15}>
      <path d="M3.500.5h-3v13h3M11.500.5h3v13h-3" stroke={INK} />
      <circle cx="6" cy="6" r="3.500" fill="#c5ccd6" stroke={INK} />
      <path d="m5.500 7 1-1h5v5l-1 1h-5z" stroke={INK} />
    </Svg>
  ),
  links: (
    <Svg w={17} h={9}>
      <rect x="1" y="2" width="7" height="5" rx="2.500" stroke="#b07a08" strokeWidth="2" />
      <rect x="9" y="2" width="7" height="5" rx="2.500" stroke="#b07a08" strokeWidth="2" />
      <path d="M5 4.500h7" stroke="#f2b928" strokeWidth="2" />
    </Svg>
  ),
};

function RootNode({ icon, label, state }: { icon: string; label: string; state?: "open" | "closed" }) {
  return (
    <li className="flex h-[18px] items-center">
      <span className="flex w-[18px] shrink-0 items-center pl-1">
        {state ? <Expander open={state === "open"} /> : <span className="w-1" />}
        <span className="flex-1 border-t border-dotted border-[#888]" />
      </span>
      <span className="flex w-[18px] shrink-0 justify-center">{treeIcons[icon]}</span>
      <span className="pl-1.5 whitespace-nowrap">{label}</span>
    </li>
  );
}

function ViewNode({ label, open }: { label: string; open?: boolean }) {
  return (
    <li className="flex h-[18px] items-center pl-6">
      <Expander open={open} />
      <span className="w-2.5 border-t border-dotted border-[#888]" />
      <span className="pl-[3px] whitespace-nowrap">{label}</span>
    </li>
  );
}

function Browser() {
  return (
    <section className="mt-1 flex min-h-0 flex-1 flex-col">
      <PaneHeader title="Prohlížeč projektu - ZL_Vchodove.rfa" />
      <ul className="relative mt-0.5 flex-1 overflow-hidden border-t border-r-2 border-l-2 border-t-[#777] border-r-[#e0e0e0] border-l-[#999] bg-white text-[11px] text-black">
        <li aria-hidden="true" className="absolute top-[14px] left-2 h-[158px] border-l border-dotted border-[#888]" />
        <li aria-hidden="true" className="absolute top-[14px] left-7 h-[86px] border-l border-dotted border-[#888]" />
        <RootNode icon="views" label="Pohledy (all)" state="open" />
        <ViewNode label="Půdorysy (Floor Plan)" open />
        <li className="flex h-[18px] items-center pl-12">
          <span className="h-full w-[15px] border-l border-dotted border-[#888]">
            <span className="block h-2.5 border-b border-dotted border-[#888]" />
          </span>
          <span className="bg-[#e0e0e0] px-[3px] text-xs leading-[18px] font-bold">Ref. Level</span>
        </li>
        <ViewNode label="Půdorysy stropů (Ceiling Plan)" />
        <ViewNode label="3D pohledy (3D View)" />
        <ViewNode label="Pohledy (Elevation 1)" />
        <RootNode icon="sheets" label="Výkresy (all)" />
        <RootNode icon="families" label="Rodiny" state="closed" />
        <RootNode icon="groups" label="Skupiny" state="closed" />
        <RootNode icon="links" label="Připojené soubory aplikace Revit" />
      </ul>
    </section>
  );
}

function Lock({ x, y }: { x: number; y: number }) {
  return (
    <g transform={`translate(${x} ${y})`}>
      <path d="M2.500 7V3.500c0-4 7-4 7 0V7M4.500 7V4c0-2 3-2 3 0v3" stroke="#0a46c4" />
      <rect x=".5" y="6.500" width="11" height="8" fill="#b9f1f7" stroke="#0a46c4" />
    </g>
  );
}

function Grip({ x, y, r }: { x: number; y: number; r: number }) {
  return <circle cx={x} cy={y} r={r} fill="#5c9fe0" stroke="#35557d" />;
}

function Drawing() {
  const green = "#008a0a";
  return (
    <svg className="absolute inset-0 h-full w-full" fill="none" aria-label="Půdorys">
      <g transform="translate(-227 -168)">
        <g shapeRendering="crispEdges">
          <path d="M227 524h88M1239 524h108" stroke="#000" strokeWidth="2" />
          <path d="M315 524v151M1239 524v151" stroke="#000" strokeWidth="2" />
          <path d="M315 524.500h924" stroke="#0a50d8" />
          <path d="M231 524.500h1116" stroke={green} strokeDasharray="16 16" />
          <path d="M314.500 171v504M1238.500 171v504" stroke={green} strokeDasharray="16 16" />
          <path d="M776.500 169v496" stroke={green} strokeDasharray="16 16" />
          <path d="M361.500 168v507" stroke="#000" strokeDasharray="20 3" />
          <path d="M361.500 176v499" stroke={green} strokeDasharray="10 54" />
          <path d="M361.500 490v185" stroke="#1a8fd6" strokeDasharray="10 14" />
          <path d="M1192.500 168v507" stroke="#1a8fd6" strokeDasharray="19 6 7 6" />
          <path d="M1192.500 180v495" stroke={green} strokeDasharray="8 24" />
          <path d="M227 662.500h1120" stroke={green} strokeDasharray="16 16" strokeDashoffset="5" />
          <path d="M293.500 168v507M243 662.500h56M291.500 662v13" stroke="#000" />
          <path d="M315 511.500h924" stroke="#9fb7fa" />
          <path d="M770.500 520v9M783.500 520v9M771 523.500h13" stroke="#0a46c4" />
        </g>
        <path d="M586 168 376 675" stroke="#000" />
        <path d="M991 168 1025 206 1050 240 1073 274 1106 340 1137 410 1161 485 1170 525 1179 560 1185 600 1190 637 1190.500 675" stroke="#000" />
        <path d="M314.500 505v13M1238.500 505v13M310 516l9-9M1234 516l9-9" stroke="#8ba6f7" strokeWidth="1.500" />
        <path d="m285 656 14 13" stroke="#000" strokeWidth="2.500" />
        <path d="M315 639.500h32.500v14h14M1192 653.500h14.500v-14H1238" stroke="#888" />
        <path
          d="m315 658 18-18M315 664l25-24M323 675l25-23M329 675l21-21M347 675l14-14M353 675l8-8M1192 664l25-24M1192 669l30-29M1206 675l32-32M1212 675l26-26M1228 675l10-10M1234 675l4-4"
          stroke="#222"
        />
        <g stroke="#000" shapeRendering="crispEdges">
          <path d="M1032.500 634.500v23h129v-23l-3-2h-122zM1033 634.500h129M1034.500 635v22M1036.500 635v22M1105.500 633v24M1111.500 635v22M1140.500 633v24M1152.500 635v22M1141.500 658v17M1159.500 658v17" />
        </g>
        <path d="m356 633 5 5M1192 617l4 3" stroke="#777" />
        <Lock x={345} y={621} />
        <Lock x={1194} y={617} />
        <Grip x={314.5} y={524.5} r={4} />
        <Grip x={1238.5} y={524.5} r={4} />
        <Grip x={299.5} y={662.5} r={3} />
        <Grip x={428.5} y={662.5} r={3} />
        <g className="font-['Liberation_Sans',sans-serif] text-[25px]" fill="#000">
          <text transform="translate(279 357) rotate(-90)">Šířka = 900</text>
          <text transform="translate(486 379) rotate(-67.500)">Šířka = 900</text>
          <text transform="translate(279 686) rotate(-90)">0</text>
        </g>
        <text x="776.500" y="505" textAnchor="middle" className="text-[11px]" fill="#1a48b8">1000.0</text>
      </g>
    </svg>
  );
}

function Canvas() {
  return (
    <main className="relative min-w-0 flex-1 overflow-hidden border-t-2 border-l-2 border-[#777] bg-white">
      <Drawing />
      <div className="absolute top-2 right-1 flex items-center gap-1.5 text-[#444]">
        <button aria-label="Minimalizovat pohled">
          <Svg w={13} h={12}><path d="M.5 6.500h11v3H.5z" fill="#fff" stroke="#555" /></Svg>
        </button>
        <button aria-label="Obnovit pohled">
          <Svg w={12} h={12}><path d="M.5 3.500h8v8h-8zM3.500 3v-2.500h8v8H9M3.500 6.500h2v2h-2z" stroke="#444" /></Svg>
        </button>
        <button aria-label="Zavřít pohled">
          <Svg w={12} h={12}>
            <path d="M.5 1.500h3L6 4l2.500-2.500h3L8 6l3.500 4.500h-3L6 8l-2.500 2.500h-3L4 6z" fill="#fff" stroke="#444" />
          </Svg>
        </button>
      </div>
      <div className="absolute top-7 right-px flex h-[118px] w-9 flex-col items-center rounded-md border-2 border-[#bcbcbc] bg-[#f4f4f4]">
        <button aria-label="Zavřít navigaci" className="mt-0.5 mr-0.5 self-end">
          <Svg w={8} h={8}><circle cx="4" cy="4" r="4" fill="#aaa" /><path d="m2.500 2.500 3 3M5.500 2.500l-3 3" stroke="#fff" /></Svg>
        </button>
        <button aria-label="Navigační kolečko 2D" className="mt-2">
          <Svg w={25} h={25}>
            <path d="M10 1h9v9a9 9 0 1 1-9-9z" fill="#e4e4e8" stroke="#999" />
            <circle cx="10" cy="10" r="4.500" fill="#f4f4f4" stroke="#999" />
            <path d="m3 17 4-4" stroke="#999" />
            <text x="12" y="23" className="font-['Liberation_Sans',sans-serif] text-[10px] font-bold" fill="#7aa0cc">2D</text>
          </Svg>
        </button>
        <span className="mt-1.5"><Arrow color="#999" /></span>
        <span className="mt-1 h-px w-[26px] shrink-0 bg-[#bbb]" />
        <button aria-label="Přiblížit oblast" className="mt-2">
          <Svg w={17} h={17}>
            <path d="M.5.5h11v11H.5z" fill="#b8d3a4" stroke="#9dbf86" />
            <circle cx="10.500" cy="10.500" r="3.500" fill="#eee" stroke="#888" />
            <path d="m13 13 3.500 3.500" stroke="#888" strokeWidth="1.500" />
          </Svg>
        </button>
        <span className="mt-2"><Arrow color="#999" /></span>
        <button aria-label="Možnosti navigace" className="mt-auto mr-0.5 mb-0.5 self-end">
          <Svg w={8} h={8}><circle cx="4" cy="4" r="4" fill="#aaa" /><path d="M2 3.500h4M2 5.500h4" stroke="#fff" /></Svg>
        </button>
      </div>
    </main>
  );
}

export default function App() {
  return (
    <div className="flex h-screen w-full flex-col overflow-hidden bg-[#f0f0f0] font-['Open_Sans','Noto_Sans',sans-serif]">
      <Header />
      <Ribbon />
      <div className="flex h-[27px] shrink-0 items-center bg-[#d7e2d1] pt-0.5 pl-[9px] text-[11px] text-[#aaa] [text-shadow:1px_1px_0_white]">
        Upravit | Čáry
      </div>
      <div className="flex min-h-0 flex-1">
        <aside className="flex w-[221px] shrink-0 flex-col">
          <Properties />
          <Browser />
        </aside>
        <div className="w-1 shrink-0" />
        <Canvas />
        <div className="flex w-2 shrink-0 flex-col overflow-hidden bg-[#f0f0f0]">
          <span className="mt-2 ml-1"><Svg w={8} h={5}><path d="m.5 4.500 3.500-4 3.500 4" stroke="#444" strokeWidth="1.500" /></Svg></span>
          <span className="mt-[235px] h-[17px] w-full bg-[#cdcdcd]" />
        </div>
      </div>
    </div>
  );
}
